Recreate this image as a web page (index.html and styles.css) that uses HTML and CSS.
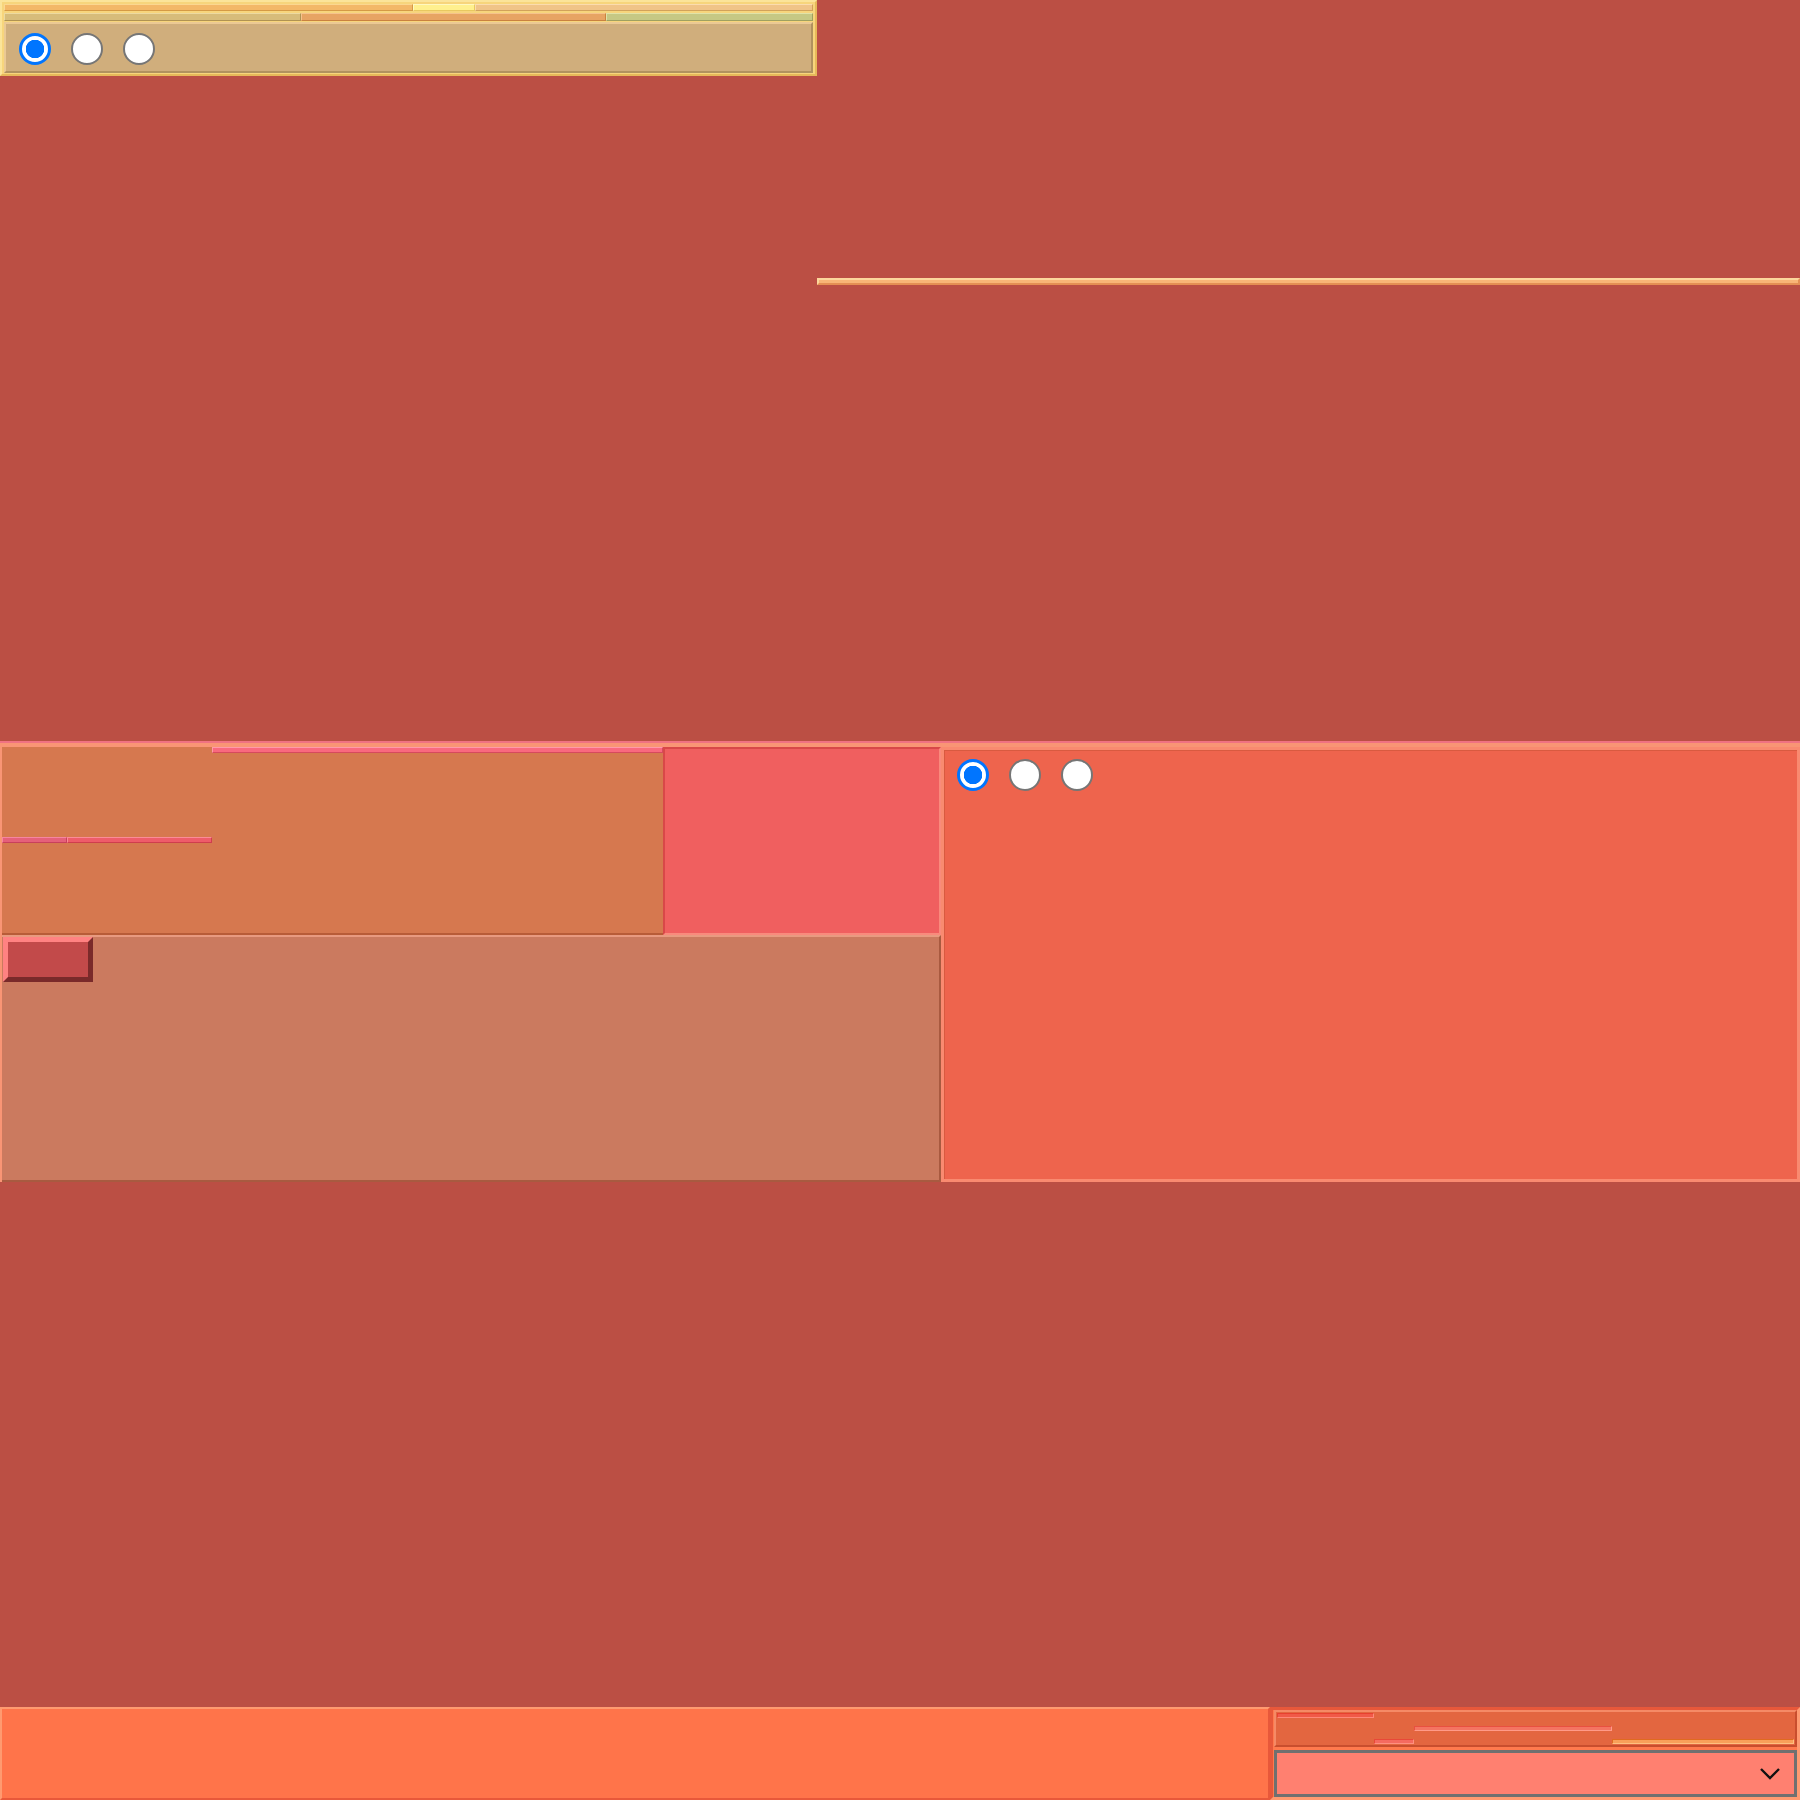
FILE: index.html
```html
<!DOCTYPE html>
<html>
<head>
<meta charset="utf-8">
<link rel="stylesheet" href="styles.css">
</head>
<body>
<div class="page">
  <div class="top-row">
    <div class="panel-a">
      <div class="bars-a1">
        <div class="seg a1-1"></div>
        <div class="seg a1-2"></div>
        <div class="seg a1-3"></div>
      </div>
      <div class="bars-a2">
        <div class="seg a2-1"></div>
        <div class="seg a2-2"></div>
        <div class="seg a2-3"></div>
      </div>
      <div class="radio-box-a">
        <input type="radio" name="ga" class="rd" checked>
        <input type="radio" name="ga" class="rd">
        <input type="radio" name="ga" class="rd">
      </div>
    </div>
    <div class="line-a"></div>
  </div>

  <div class="mid">
    <div class="mid-left">
      <div class="mid-top">
        <div class="orange-box">
          <div class="ob-bars">
            <div class="seg ob-1"></div>
            <div class="seg ob-2"></div>
            <div class="seg ob-3"></div>
          </div>
        </div>
        <div class="pink-box"></div>
      </div>
      <div class="tan-box">
        <button class="btn" type="button"></button>
      </div>
    </div>
    <div class="mid-right">
      <input type="radio" name="gb" class="rd" checked>
      <input type="radio" name="gb" class="rd">
      <input type="radio" name="gb" class="rd">
    </div>
  </div>

  <div class="spacer"></div>

  <div class="bottom">
    <div class="bottom-left"></div>
    <div class="bottom-right">
      <div class="br-bars">
        <div class="seg br-1"></div>
        <div class="seg br-2"></div>
        <div class="seg br-3"></div>
        <div class="seg br-4"></div>
      </div>
      <div class="select">
        <svg class="chev" width="22" height="14" viewBox="0 0 22 14"><path d="M2 2 L11 11 L20 2" fill="none" stroke="#111" stroke-width="2.4"/></svg>
      </div>
    </div>
  </div>
</div>
</body>
</html>
```

FILE: styles.css
```css
* { box-sizing: border-box; }
html, body { margin: 0; padding: 0; }
body { background: #bb4f44; font-family: "Liberation Sans", sans-serif; }
.page { width: 1800px; height: 1800px; display: flex; flex-direction: column; }

.seg { border: 1px solid; }

/* top */
.top-row { display: flex; height: 741px; align-items: flex-start; }
.panel-a {
  width: 817px; height: 76px;
  background: #f7d57c;
  border: 2px solid; border-color: #fbe49a #e6b95a #e6b95a #fbe49a;
  padding: 2px 2px 1px 2px;
  display: flex; flex-direction: column;
}
.bars-a1 { display: flex; height: 7px; align-items: flex-start; }
.bars-a2 { display: flex; height: 8px; margin-top: 2px; align-items: flex-start; }
.a1-1 { width: 409px; height: 7px; background: #f3b868; border-color: #fbd790 #d59a45 #d59a45 #fbd790; }
.a1-2 { width: 62px; height: 7px; background: #fff08e; border-color: #fff8c0 #e8c860 #e8c860 #fff8c0; }
.a1-3 { flex: 1; height: 7px; background: #f0c488; border-color: #fbdcae #d2a25a #d2a25a #fbdcae; }
.a2-1 { width: 297px; height: 8px; background: #d7bc7a; border-color: #ecd9a0 #b09352 #b09352 #ecd9a0; }
.a2-2 { width: 305px; height: 8px; background: #e7a463; border-color: #f5c38c #c9823f #c9823f #f5c38c; }
.a2-3 { flex: 1; height: 8px; background: #c6c884; border-color: #e0e2a8 #9fa160 #9fa160 #e0e2a8; }
.radio-box-a {
  height: 51px; margin-top: 1px;
  background: #d0ae7c;
  border: 2px solid; border-color: #ebc994 #b0925f #b0925f #ebc994;
  padding: 9px 13px;
  display: flex; gap: 20px; align-items: flex-start;
}
.line-a {
  flex: 1; height: 7px; margin-top: 278px;
  background: #f8b577;
  border: 2px solid; border-color: #fcd79c #e48f54 #e48f54 #fcd79c;
}

/* radios */
.rd {
  appearance: none; -webkit-appearance: none;
  margin: 0; width: 32px; height: 32px; border-radius: 50%;
  background: #fff; border: 2px solid #767676;
}
.rd:checked {
  border: 3px solid #0075ff;
  background: radial-gradient(circle, #0075ff 0 9px, #fff 9.5px);
}

/* middle */
.mid {
  height: 441px; display: flex;
  border-top: 2px solid #f07282;
  background: #f99575;
  padding: 4px 0 0 2px;
}
.mid-left { width: 939px; display: flex; flex-direction: column; }
.mid-top { height: 188px; display: flex; }
.orange-box {
  width: 661px; background: #d6784f;
  border-bottom: 2px solid #b85c38;
}
.ob-bars { display: flex; height: 100%; }
.ob-1 { width: 65px; height: 6px; align-self: center; background: #e5607a; border-color: #f586a0 #c8405c #c8405c #f586a0; }
.ob-2 { width: 145px; height: 6px; align-self: center; background: #ee5c6a; border-color: #fa8c96 #cf3e4e #cf3e4e #fa8c96; }
.ob-3 { flex: 1; height: 6px; align-self: flex-start; background: #f9697f; border-color: #ff9aa8 #d64a5e #d64a5e #ff9aa8; }
.pink-box {
  flex: 1; background: #f05f5f;
  border: 2px solid; border-color: #d84848 #f98a7c #f98a7c #d84848;
}
.tan-box {
  flex: 1; background: #cb7a5f;
  border-top: 2px solid #e89a80;
  border-right: 2px solid #a85a40;
  border-bottom: 2px solid #a85a40;
  padding: 0 0 0 1px;
}
.btn {
  display: block;
  width: 90px; height: 45px; margin: 0; padding: 0;
  background: #c24a4a;
  border: 5px solid; border-color: #ff8282 #7a2a2a #7a2a2a #ff8282;
}
.mid-right {
  flex: 1; background: #ee644d;
  border: 3px solid #f98a70;
  box-shadow: inset 1px 1px 0 #d85a40;
  margin-left: 0;
  padding: 9px 13px;
  display: flex; gap: 20px; align-items: flex-start;
}

.spacer { height: 525px; }

/* bottom */
.bottom { flex: 1; display: flex; }
.bottom-left {
  width: 1270px; background: #ff744a;
  border: 2px solid; border-color: #ff9a70 #e8583a #e8583a #ff9a70;
}
.bottom-right {
  flex: 1; background: #ff7a4e;
  border: 3px solid; border-color: #e8583a #ff9a70 #ff9a70 #e8583a;
  padding: 0 0 0 1px;
  display: flex; flex-direction: column; gap: 3px;
}
.br-bars {
  height: 37px; display: flex;
  background: #e36640;
  border: 2px solid; border-color: #f58a66 #c84e2e #c84e2e #f58a66;
  padding: 1px;
}
.br-1 { width: 97px; height: 5px; align-self: flex-start; background: #f05a48; border-color: #e84030 #ff8878 #ff8878 #e84030; }
.br-2 { width: 40px; height: 5px; align-self: flex-end; background: #f56a60; border-color: #e84838 #ff9080 #ff9080 #e84838; }
.br-3 { width: 198px; height: 5px; align-self: center; background: #f47462; border-color: #e85040 #ff9a88 #ff9a88 #e85040; }
.br-4 { flex: 1; height: 5px; align-self: flex-end; background: #f9a05a; border-color: #e06a20 #ffc080 #ffc080 #e06a20; }
.select {
  flex: 1; background: #ff8070;
  border: 3px solid #707070;
  position: relative;
  display: flex; align-items: center; justify-content: flex-end;
  padding-right: 13px;
}
.chev { display: block; }
```
